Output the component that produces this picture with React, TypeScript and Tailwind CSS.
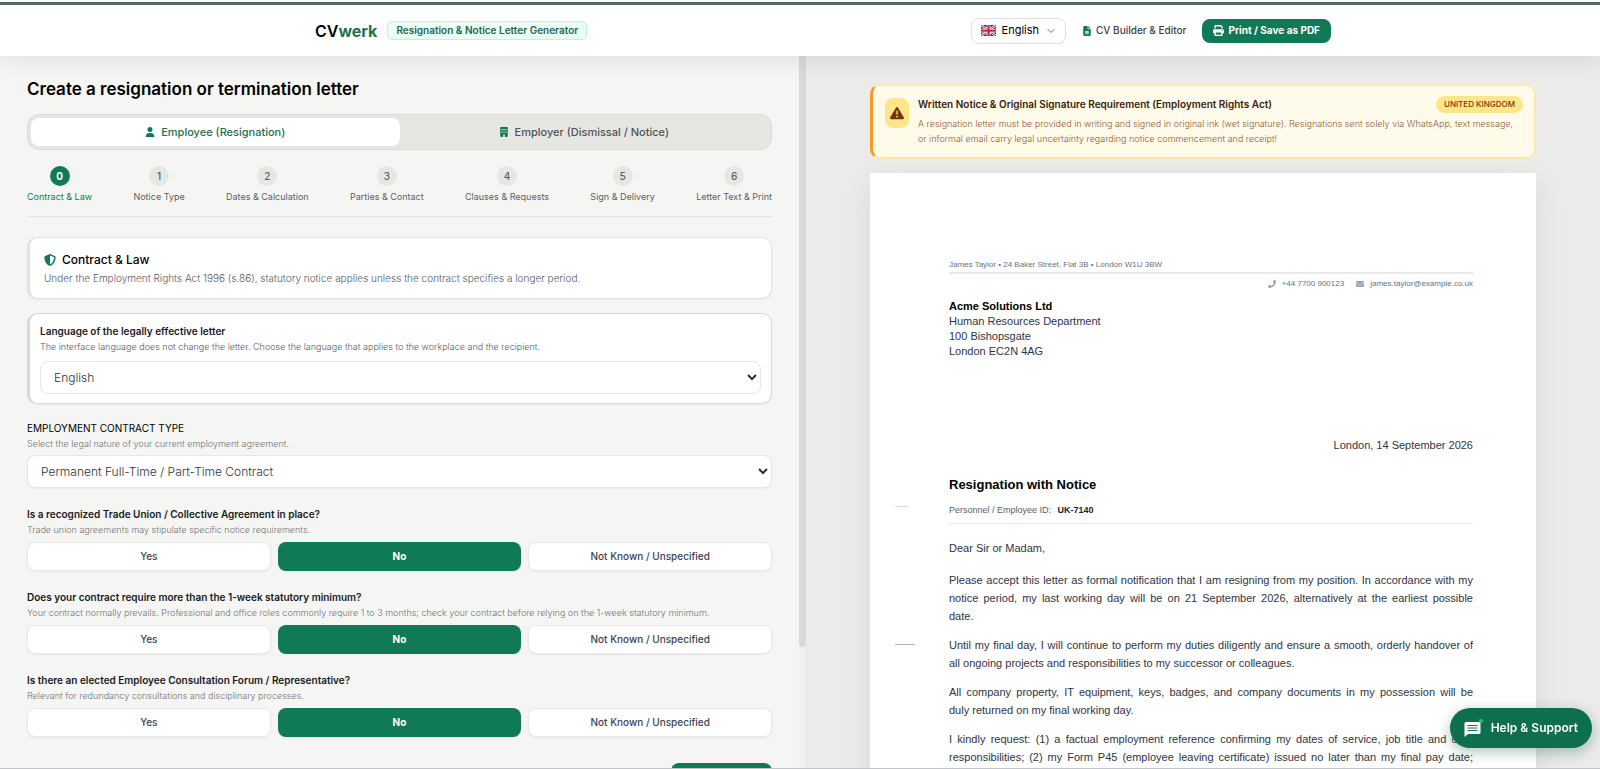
import React, { useState } from 'react';
import { FaPhone } from 'react-icons/fa';
import {
  FaBuilding,
  FaEnvelope,
  FaFileLines,
  FaPrint,
  FaShieldHalved,
  FaTriangleExclamation,
  FaUser,
} from 'react-icons/fa6';
import { ChevronDown } from 'lucide-react';

type Answer = 'Yes' | 'No' | 'Not Known / Unspecified';

const answers: Answer[] = ['Yes', 'No', 'Not Known / Unspecified'];

const steps = [
  'Contract & Law',
  'Notice Type',
  'Dates & Calculation',
  'Parties & Contact',
  'Clauses & Requests',
  'Sign & Delivery',
  'Letter Text & Print',
];

const questions = [
  {
    id: 'union',
    label: 'Is a recognized Trade Union / Collective Agreement in place?',
    help: 'Trade union agreements may stipulate specific notice requirements.',
  },
  {
    id: 'notice',
    label: 'Does your contract require more than the 1-week statutory minimum?',
    help: 'Your contract normally prevails. Professional and office roles commonly require 1 to 3 months; check your contract before relying on the 1-week statutory minimum.',
  },
  {
    id: 'forum',
    label: 'Is there an elected Employee Consultation Forum / Representative?',
    help: 'Relevant for redundancy consultations and disciplinary processes.',
  },
];

// the letter is typeset line by line so that screen and print break the same way
const paragraphs = [
  [
    'Please accept this letter as formal notification that I am resigning from my position. In accordance with my',
    'notice period, my last working day will be on 21 September 2026, alternatively at the earliest possible',
    'date.',
  ],
  [
    'Until my final day, I will continue to perform my duties diligently and ensure a smooth, orderly handover of',
    'all ongoing projects and responsibilities to my successor or colleagues.',
  ],
  [
    'All company property, IT equipment, keys, badges, and company documents in my possession will be',
    'duly returned on my final working day.',
  ],
  [
    'I kindly request: (1) a factual employment reference confirming my dates of service, job title and core',
    'responsibilities; (2) my Form P45 (employee leaving certificate) issued no later than my final pay date;',
    '',
  ],
];

function UkFlag() {
  return (
    <svg viewBox="0 0 60 44" className="h-[11px] w-[15px]" aria-hidden="true">
      <rect width="60" height="44" fill="#1f2f7a" />
      <path d="M0 0L60 44M60 0L0 44" stroke="#fff" strokeWidth="9" />
      <path d="M0 0L60 44M60 0L0 44" stroke="#d4213d" strokeWidth="4" />
      <path d="M30 0V44M0 22H60" stroke="#fff" strokeWidth="15" />
      <path d="M30 0V44M0 22H60" stroke="#d4213d" strokeWidth="9" />
    </svg>
  );
}

function Header() {
  return (
    <header className="relative z-10 bg-white pt-0.5 shadow-[0_4px_24px_rgba(0,0,0,0.09)]">
      <div className="h-[3px] bg-[#47705f]" />
      <div className="mx-auto flex h-[51px] max-w-[1062px] items-center justify-between">
        <div className="flex items-center gap-2.5 pl-[46px]">
          <a href="#" className="text-base font-semibold text-black">
            CV<span className="font-bold text-[#1b7350]">werk</span>
          </a>
          <span className="rounded-[5px] border border-[#bdf3da] bg-[#ecfdf5] px-2 text-[10px] leading-[17px] font-semibold text-[#22694c]">
            Resignation &amp; Notice Letter Generator
          </span>
        </div>
        <div className="flex items-center gap-4">
          <button type="button" className="flex h-[26px] items-center gap-1.5 rounded-lg border border-[#dededb] bg-white pr-2 pl-[9px] text-[11px] text-black">
            <UkFlag />
            English
            <ChevronDown className="size-3 text-[#777]" />
          </button>
          <a href="#" className="flex items-center gap-1 text-[10px] font-medium text-[#3d4046]">
            <FaFileLines className="size-2.5 text-[#0f7a55]" />
            CV Builder &amp; Editor
          </a>
          <button type="button" className="flex h-6 items-center gap-1 rounded-lg bg-[#0f7a55] px-[11px] text-[10px] font-bold text-white">
            <FaPrint className="size-[11px]" />
            Print / Save as PDF
          </button>
        </div>
      </div>
    </header>
  );
}

function Stepper() {
  return (
    <ol className="mt-4 flex justify-between border-b border-[#e4e5e2] pb-[11px]">
      {steps.map((step, i) => (
        <li key={step} className={`flex flex-col items-center gap-[3px] text-[9px] leading-4 ${i === 0 ? 'text-[#0f7a55]' : 'text-[#5a5e65]'}`}>
          <span className={`flex size-5 items-center justify-center rounded-full text-[10px] ${i === 0 ? 'bg-[#0f7a55] font-bold text-white' : 'bg-[#e6e7e3] font-medium'}`}>
            {i}
          </span>
          {step}
        </li>
      ))}
    </ol>
  );
}

function Question({ id, label, help }: { id: string; label: string; help: string }) {
  const [value, setValue] = useState<Answer>('No');
  return (
    <section className="mt-[18px]" aria-labelledby={id}>
      <h3 id={id} className="text-[10px] leading-4 font-semibold text-[#17191c]">{label}</h3>
      <p className="text-[9px] leading-[15px] font-light text-[#6f7378]">{help}</p>
      <div className="mt-[5px] grid grid-cols-3 gap-[7px]">
        {answers.map(a => (
          <button
            key={a}
            type="button"
            aria-pressed={value === a}
            onClick={() => setValue(a)}
            className={`h-[29px] rounded-lg text-[10px] shadow-xs ${value === a ? 'bg-[#0f7a55] font-bold text-white' : 'border border-[#e9eae7] bg-white font-medium text-[#3c4250]'}`}
          >
            {a}
          </button>
        ))}
      </div>
    </section>
  );
}

function Form() {
  return (
    <div className="flex min-w-0 flex-[806] overflow-hidden bg-[#f5f6f4]">
      <main className="min-w-0 flex-1 px-[27px] pt-[21px]">
        <h1 className="text-[17px] leading-6 font-semibold text-black">Create a resignation or termination letter</h1>
        <div className="mt-[13px] grid h-9 grid-cols-2 rounded-xl border border-[#dadbd8] bg-[#e6e7e3] p-[3px] text-[11px] font-medium">
          <button type="button" className="flex items-center justify-center gap-1.5 rounded-lg bg-white text-[#23704f]">
            <FaUser className="size-2.5 text-[#0f7a55]" />
            Employee (Resignation)
          </button>
          <button type="button" className="flex items-center justify-center gap-1.5 text-[#4f5359]">
            <FaBuilding className="size-2.5 text-[#0f7a55]" />
            Employer (Dismissal / Notice)
          </button>
        </div>
        <Stepper />

        <section className="mt-5 rounded-[10px] border border-l-[3px] border-[#e2e3e0] bg-white px-3.5 py-3 shadow-xs">
          <h2 className="flex items-center gap-1.5 text-xs leading-5 font-medium text-black">
            <FaShieldHalved className="size-3 text-[#0f7a55]" />
            Contract &amp; Law
          </h2>
          <p className="text-[10px] leading-4 font-light text-[#55595f]">
            Under the Employment Rights Act 1996 (s.86), statutory notice applies unless the contract specifies a longer period.
          </p>
        </section>

        <section className="mt-3.5 rounded-[10px] border border-l-[3px] border-[#d9dad7] bg-white px-2.5 py-[9px] shadow-xs">
          <label htmlFor="language" className="block text-[10px] leading-4 font-semibold text-[#17191c]">
            Language of the legally effective letter
          </label>
          <p className="text-[9px] leading-4 font-light text-[#55595f]">
            The interface language does not change the letter. Choose the language that applies to the workplace and the recipient.
          </p>
          <select id="language" className="mt-1.5 h-[33px] w-full rounded-lg border border-[#e6e7e4] bg-white px-[9px] text-xs font-light text-[#2f3338]">
            <option>English</option>
          </select>
        </section>

        <section className="mt-4">
          <label htmlFor="contract" className="block text-[10px] leading-4 text-black uppercase">
            Employment contract type
          </label>
          <p className="text-[9px] leading-[15px] font-light text-[#6f7378]">Select the legal nature of your current employment agreement.</p>
          <select id="contract" className="mt-1 h-[33px] w-full rounded-lg border border-[#e6e7e4] bg-white px-[9px] text-xs font-light text-[#2f3338] shadow-xs">
            <option>Permanent Full-Time / Part-Time Contract</option>
          </select>
        </section>

        {questions.map(q => <Question key={q.id} {...q} />)}

        <div className="mt-[26px] flex justify-end">
          <button type="button" aria-label="Next step" className="h-10 w-[101px] rounded-lg bg-[#0f7a55]" />
        </div>
      </main>
      <div className="w-[7px] bg-[#f0f0ee]">
        <div className="h-[83%] rounded-b-full bg-[#d9dad6]" />
      </div>
    </div>
  );
}

function LegalNotice() {
  return (
    <aside className="flex gap-[9px] rounded-[10px] border-2 border-l-[3px] border-[#fde9ae] border-l-[#fb9a1f] bg-[#fffbeb] pt-[9px] pr-[11px] pb-[11px] pl-3">
      <span className="mt-[3px] flex h-[30px] w-6 shrink-0 items-center justify-center rounded-lg bg-[#fde68a]">
        <FaTriangleExclamation className="size-3.5 text-[#78350f]" />
      </span>
      <div className="min-w-0 flex-1">
        <div className="flex items-center justify-between">
          <h2 className="text-[10px] leading-[18px] font-semibold text-[#3b1a08]">
            Written Notice &amp; Original Signature Requirement (Employment Rights Act)
          </h2>
          <span className="rounded-full bg-[#fde68a] px-2 text-[8px] leading-[17px] font-medium text-[#78350f]">UNITED KINGDOM</span>
        </div>
        <p className="mt-[3px] text-[9px] leading-[15px] font-light text-[#92592b]">
          A resignation letter must be provided in writing and signed in original ink (wet signature). Resignations sent solely via WhatsApp, text message, or informal email carry legal uncertainty regarding notice commencement and receipt!
        </p>
      </div>
    </aside>
  );
}

function Letter() {
  return (
    <article className="relative mt-3.5 bg-white pt-[85px] pr-[63px] pb-20 pl-[79px] font-['Liberation_Sans',Arial,sans-serif] text-[11px] text-[#2f3440] shadow-[0_8px_30px_rgba(0,0,0,0.08)]">
      {/* fold and punch marks on the sheet's edge */}
      <span className="absolute top-[333px] left-[25px] h-px w-[13px] bg-[#d5d7dc]" />
      <span className="absolute top-[471px] left-[25px] h-px w-5 bg-[#a9adb8]" />

      <p className="border-b-2 border-[#e8e9eb] text-[8px] leading-[14px] text-[#6b7280]">
        James Taylor • 24 Baker Street, Flat 3B • London W1U 3BW
      </p>
      <p className="flex justify-end gap-3 text-[8px] leading-5 text-[#6b7280]">
        <span className="flex items-center gap-1.5"><FaPhone className="text-[#9ca0b3]" />+44 7700 900123</span>
        <span className="flex items-center gap-1.5"><FaEnvelope className="text-[#9ca0b3]" />james.taylor@example.co.uk</span>
      </p>
      <address className="mt-[5px] leading-[15px] not-italic">
        <strong className="text-black">Acme Solutions Ltd</strong>
        <br />
        Human Resources Department
        <br />
        100 Bishopsgate
        <br />
        London EC2N 4AG
      </address>
      <p className="mt-[77px] text-right leading-[18px]">London, 14 September 2026</p>
      <h2 className="mt-[21px] text-[13px] leading-5 font-bold text-black">Resignation with Notice</h2>
      <p className="mt-[7px] border-b border-[#e5e7eb] pb-[5px] text-[9px] leading-4 text-[#5b606b]">
        Personnel / Employee ID: <strong className="ml-1 text-[#20242c]">UK-7140</strong>
      </p>
      <p className="mt-[15px] leading-[18px]">Dear Sir or Madam,</p>
      <div className="mt-3.5 flex flex-col gap-[11px] text-justify leading-[18px]">
        {paragraphs.map((lines, i) => (
          <p key={i}>
            {lines.map((line, n) => (
              <span key={n} className={n < lines.length - 1 ? 'block [text-align-last:justify]' : 'block'}>
                {line}{' '}
              </span>
            ))}
          </p>
        ))}
      </div>
    </article>
  );
}

function HelpButton() {
  return (
    <button type="button" className="fixed right-2 bottom-[21px] z-20 flex h-10 items-center gap-2 rounded-full bg-[#0e6f4e] px-3.5 text-xs font-semibold text-white shadow-[0_4px_14px_rgba(15,90,60,0.35)]">
      <svg viewBox="0 0 19 19" className="size-[19px]" aria-hidden="true">
        <path d="M2 3h13a1.5 1.5 0 0 1 1.500 1.500v9a1.500 1.500 0 0 1-1.500 1.500H4l-3.500 3V4.500A1.500 1.500 0 0 1 2 3z" fill="#fff" />
        <path d="M3.500 6.500h10M3.500 9h10M3.500 11.500h10" stroke="#0e6f4e" />
        <circle cx="17" cy="2" r="2" fill="#22c55e" />
      </svg>
      Help &amp; Support
    </button>
  );
}

export default function App() {
  return (
    <div className="flex h-screen flex-col overflow-hidden border-b border-[#c0c5cc] font-[Inter,sans-serif]">
      <Header />
      <div className="flex min-h-0 flex-1">
        <Form />
        <div className="min-w-0 flex-[794] overflow-hidden bg-[#ebebe9] pt-7">
          <div className="mx-auto max-w-[666px]">
            <LegalNotice />
            <Letter />
          </div>
        </div>
      </div>
      <HelpButton />
    </div>
  );
}
